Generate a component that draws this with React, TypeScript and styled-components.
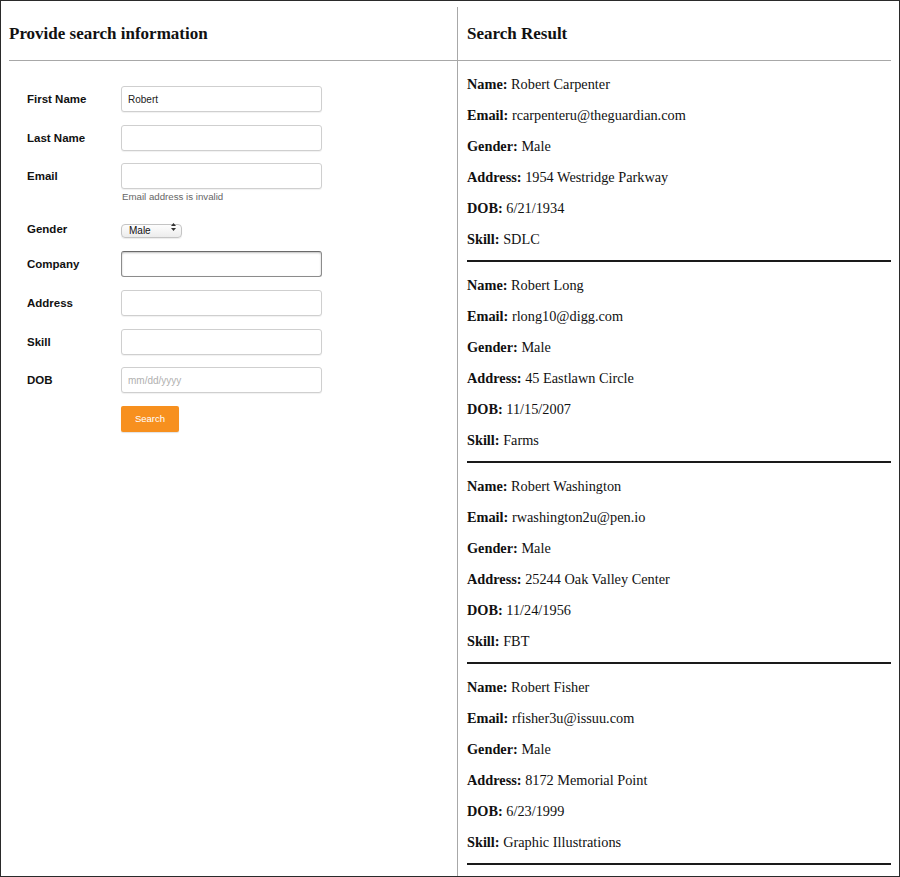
import React from 'react';
import styled, { createGlobalStyle } from 'styled-components';

const GlobalStyle = createGlobalStyle`
  html, body {
    margin: 0;
    padding: 0;
    background: #fff;
  }
`;

type Person = {
  name: string;
  email: string;
  gender: string;
  address: string;
  dob: string;
  skill: string;
};

const results: Person[] = [
  { name: 'Robert Carpenter', email: 'rcarpenteru@theguardian.com', gender: 'Male', address: '1954 Westridge Parkway', dob: '6/21/1934', skill: 'SDLC' },
  { name: 'Robert Long', email: 'rlong10@digg.com', gender: 'Male', address: '45 Eastlawn Circle', dob: '11/15/2007', skill: 'Farms' },
  { name: 'Robert Washington', email: 'rwashington2u@pen.io', gender: 'Male', address: '25244 Oak Valley Center', dob: '11/24/1956', skill: 'FBT' },
  { name: 'Robert Fisher', email: 'rfisher3u@issuu.com', gender: 'Male', address: '8172 Memorial Point', dob: '6/23/1999', skill: 'Graphic Illustrations' },
];

const Page = styled.div`
  width: 900px;
  height: 877px;
  box-sizing: border-box;
  border: 1px solid #2a2a2a;
  padding: 6px 8px 0 8px;
  overflow: hidden;
  display: grid;
  grid-template-columns: 449px 1fr;
`;

const Column = styled.section<{ $divider?: boolean }>`
  display: flex;
  flex-direction: column;
  border-right: ${(p) => (p.$divider ? '1px solid #a8a8a8' : 'none')};
`;

const Header = styled.div<{ $indent?: number }>`
  height: 53px;
  display: flex;
  align-items: center;
  padding-left: ${(p) => p.$indent ?? 0}px;
  border-bottom: 1px solid #a8a8a8;
`;

const Heading = styled.h3`
  margin: 0;
  font-family: "Liberation Serif", "Times New Roman", serif;
  font-size: 17px;
  font-weight: bold;
  color: #111;
`;

const Form = styled.form`
  display: grid;
  grid-template-columns: 94px 201px;
  row-gap: 12.6px;
  padding: 25px 0 0 18px;
  font-family: "Liberation Sans", Arial, sans-serif;
  align-items: start;
`;

const Label = styled.label<{ $h?: number }>`
  font-size: 11.5px;
  font-weight: bold;
  color: #111;
  line-height: ${(p) => p.$h ?? 26}px;
`;

const Input = styled.input<{ $focused?: boolean }>`
  box-sizing: border-box;
  width: 201px;
  height: 26px;
  margin: 0;
  padding: 0 6px;
  font-family: "Liberation Sans", Arial, sans-serif;
  font-size: 10px;
  color: #222;
  background: #fff;
  border: 1px solid ${(p) => (p.$focused ? '#8c8c8c' : '#cfcfcf')};
  border-top-color: ${(p) => (p.$focused ? '#6a6a6a' : '#cfcfcf')};
  border-radius: 3px;
  box-shadow: ${(p) =>
    p.$focused ? 'inset 0 1px 2px rgba(0,0,0,0.25)' : '0 1px 1px rgba(0,0,0,0.06)'};
  outline: none;

  &::placeholder {
    color: #b0b0b0;
  }
`;

const FieldStack = styled.div`
  display: flex;
  flex-direction: column;
`;

const ErrorText = styled.div`
  margin: 2px 0 4px 1px;
  font-size: 9.7px;
  line-height: 12px;
  color: #666;
`;

const SelectRow = styled.div`
  height: 19px;
  display: flex;
  align-items: flex-start;
  padding-top: 0.5px;
  box-sizing: border-box;
`;

const SelectWrap = styled.div`
  position: relative;
  width: 61px;
  height: 14px;
`;

const Select = styled.select`
  appearance: none;
  box-sizing: border-box;
  width: 61px;
  height: 14px;
  margin: 0;
  padding: 0 0 0 7px;
  font-family: "Liberation Sans", Arial, sans-serif;
  font-size: 10px;
  line-height: 12px;
  color: #111;
  border: 1px solid #c4c4c4;
  border-radius: 4px;
  background: linear-gradient(#fdfdfd, #ececec);
  box-shadow: 0 1px 1px rgba(0,0,0,0.08);
`;

const Arrows = styled.svg`
  position: absolute;
  right: 6px;
  top: 3px;
  pointer-events: none;
`;

const Button = styled.button`
  width: 58px;
  height: 26px;
  margin: 0;
  padding: 0;
  border: none;
  border-radius: 2px;
  background: #f7901e;
  color: #fff;
  font-family: "Liberation Sans", Arial, sans-serif;
  font-size: 9.5px;
  box-shadow: 0 1px 1px rgba(0,0,0,0.12);
`;

const Spacer = styled.div``;

const Result = styled.div`
  margin-left: 9px;
  padding: 14.5px 0 12.5px;
  border-bottom: 2px solid #1a1a1a;
  display: flex;
  flex-direction: column;
  gap: 14px;
`;

const Line = styled.p`
  margin: 0;
  font-family: "Liberation Serif", "Times New Roman", serif;
  font-size: 14.3px;
  line-height: 17px;
  color: #111;

  b {
    font-weight: bold;
  }
`;

function ResultCard({ person }: { person: Person }) {
  return (
    <Result>
      <Line><b>Name:</b> {person.name}</Line>
      <Line><b>Email:</b> {person.email}</Line>
      <Line><b>Gender:</b> {person.gender}</Line>
      <Line><b>Address:</b> {person.address}</Line>
      <Line><b>DOB:</b> {person.dob}</Line>
      <Line><b>Skill:</b> {person.skill}</Line>
    </Result>
  );
}

function App() {
  return (
    <>
      <GlobalStyle />
      <Page>
        <Column $divider>
          <Header>
            <Heading>Provide search information</Heading>
          </Header>
          <Form onSubmit={(e) => e.preventDefault()}>
            <Label>First Name</Label>
            <Input defaultValue="Robert" />

            <Label>Last Name</Label>
            <Input />

            <Label>Email</Label>
            <FieldStack>
              <Input />
              <ErrorText>Email address is invalid</ErrorText>
            </FieldStack>

            <Label $h={19}>Gender</Label>
            <SelectRow>
              <SelectWrap>
                <Select defaultValue="Male">
                  <option>Male</option>
                  <option>Female</option>
                </Select>
                <Arrows width="5" height="8" viewBox="0 0 5 8">
                  <path d="M2.5 0 L5 3 L0 3 Z" fill="#333" />
                  <path d="M2.5 8 L5 5 L0 5 Z" fill="#333" />
                </Arrows>
              </SelectWrap>
            </SelectRow>

            <Label>Company</Label>
            <Input $focused />

            <Label>Address</Label>
            <Input />

            <Label>Skill</Label>
            <Input />

            <Label>DOB</Label>
            <Input placeholder="mm/dd/yyyy" />

            <Spacer />
            <Button type="submit">Search</Button>
          </Form>
        </Column>
        <Column>
          <Header $indent={9}>
            <Heading>Search Result</Heading>
          </Header>
          {results.map((p) => (
            <ResultCard key={p.email} person={p} />
          ))}
        </Column>
      </Page>
    </>
  );
}

export default App;
